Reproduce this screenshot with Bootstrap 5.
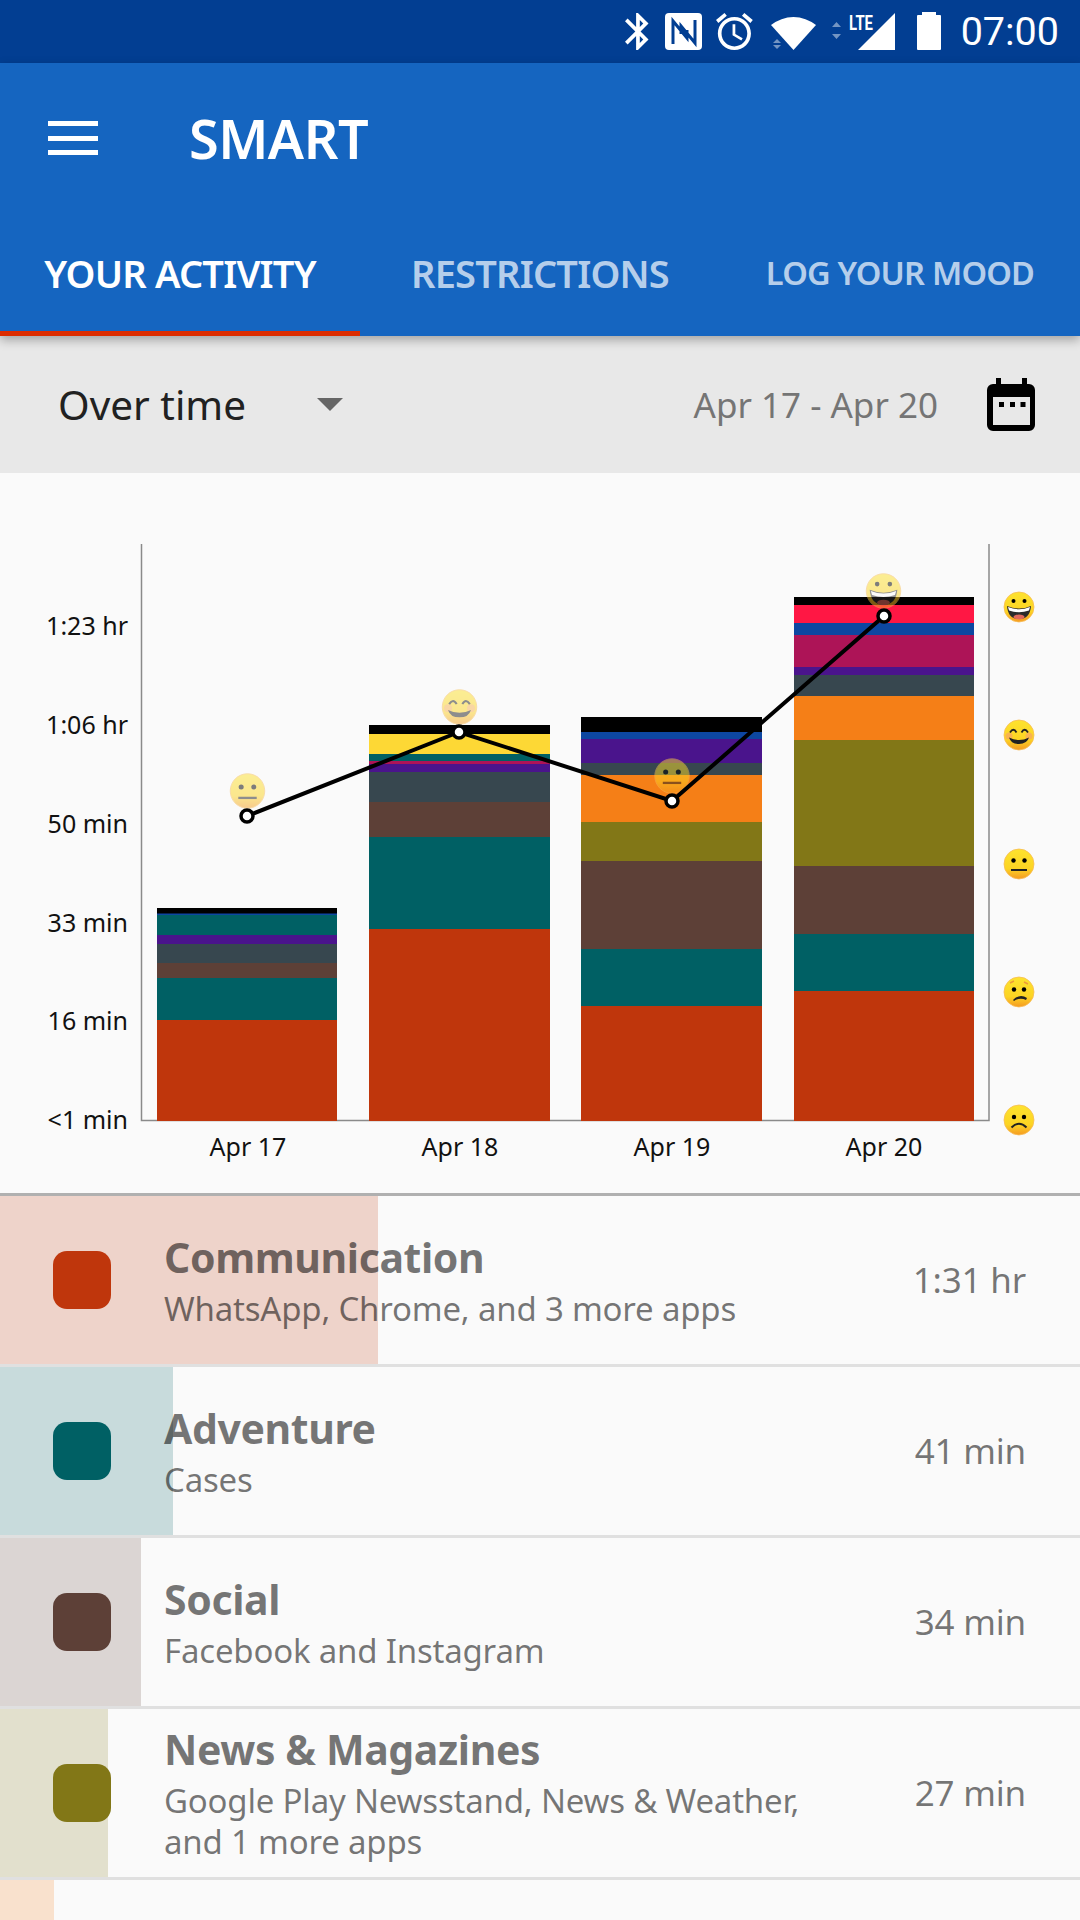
<!DOCTYPE html>
<html lang="en">
<head>
  <meta charset="UTF-8" />
  <meta name="viewport" content="width=device-width, initial-scale=1.0"/>
  <title>SMART</title>
  <link href="https://cdn.jsdelivr.net/npm/bootstrap@5.3.3/dist/css/bootstrap.min.css" rel="stylesheet">
  <style>
    body {
      background: #fafafa;
      font-family: "Noto Sans", "Open Sans", sans-serif;
      height: 1920px;
      overflow: hidden;
    }

    .status-strip { height: 63px; background: #023e92; color: #fff; padding-right: 21px; }
    .status-clock { font-family: Roboto, sans-serif; font-size: 39.5px; margin-left: 11px; }

    .app-header { background: #1565c0; box-shadow: 0 4px 10px rgba(0, 0, 0, .3); position: relative; z-index: 2; }
    .app-toolbar { height: 150px; padding-left: 48px; }
    .burger { width: 50px; margin-right: 91px; }
    .burger span { display: block; height: 5px; background: #fff; margin-bottom: 9.5px; }
    .burger span:last-child { margin-bottom: 0; }
    .app-name { font-size: 54px; font-weight: 600; color: #fff; letter-spacing: -.5px; line-height: 1; }

    .tab-strip { height: 123px; }
    .tab-strip .nav-link {
      width: 360px;
      height: 123px;
      padding: 2px 0 0;
      display: flex;
      align-items: center;
      justify-content: center;
      color: rgba(255, 255, 255, .7);
      font-size: 38px;
      font-weight: 600;
      letter-spacing: -.8px;
      border-bottom: 5px solid transparent;
    }
    .tab-strip .nav-link.active { color: #fff; border-bottom-color: #dd2c00; }
    .tab-strip .tab-tight { font-size: 32.6px; }

    .filter-bar { height: 137px; background: #e8e8e8; padding: 0 45px 0 58px; }
    .filter-label { font-size: 40.5px; color: #212121; width: 259px; padding-top: 2px; }
    .filter-caret { width: 0; height: 0; border-left: 13px solid transparent; border-right: 13px solid transparent; border-top: 13px solid #666; }
    .filter-dates { font-size: 35px; color: #757575; margin-right: 49px; padding-top: 2px; }

    .chart-box { height: 720px; }
    .chart-box svg { display: block; }
    .chart-box text { font-family: "Noto Sans", sans-serif; font-size: 25px; fill: #111; }

    .cat-list { border-top: 3px solid #b0b0b0; border-radius: 0; }
    .list-group-flush > .cat-row {
      height: 171px;
      padding: 0 54px 0 53px;
      background: transparent;
      border: 0;
      border-bottom: 3px solid #e0e0e0;
      color: rgba(0, 0, 0, .54);
    }
    .list-group-flush > .cat-row-end { height: 40px; border-bottom: 0; }
    .cat-fill { position: absolute; left: 0; top: 0; bottom: 0; opacity: .2; }
    .cat-swatch { width: 58px; height: 58px; border-radius: 14px; margin-right: 53px; position: relative; }
    .cat-text { position: relative; }
    .cat-title { font-size: 41px; font-weight: 700; line-height: 50px; letter-spacing: -.4px; }
    .cat-sub { font-size: 33px; line-height: 41px; margin-top: 6px; letter-spacing: -.2px; }
    .cat-time { font-size: 35px; position: relative; letter-spacing: -.2px; }

    .c-red { background: #bf360c; }
    .c-teal { background: #006064; }
    .c-brown { background: #5d4037; }
    .c-olive { background: #827717; }
    .c-orange { background: #f57f17; }
  </style>
</head>
<body>

<div class="status-strip d-flex align-items-center justify-content-end">
  <svg width="330" height="63" viewBox="620 0 330 63" fill="#fff">
    <path transform="translate(625 13) scale(1.85) translate(-5 -2)" d="M17.71 7.71L12 2h-1v7.59L6.41 5 5 6.41 10.59 12 5 17.59 6.41 19 11 14.41V22h1l5.71-5.71-4.3-4.29 4.3-4.29zM13 5.83l1.88 1.88L13 9.59V5.83zm1.88 10.46L13 18.17v-3.76l1.88 1.88z"/>
    <rect x="665" y="13" width="37" height="37" rx="4"/>
    <path d="M673 44V21L687 38V30M695 20V43L681 26V34" fill="none" stroke="#023e92" stroke-width="3"/>
    <path transform="translate(716 13) scale(1.84) translate(-2 -1.86)" d="M22 5.72l-4.6-3.86-1.29 1.53 4.6 3.86L22 5.72zM7.88 3.39L6.6 1.86 2 5.71l1.29 1.53 4.59-3.85zM12.5 8H11v6l4.75 2.85.75-1.23-4-2.37V8zM12 4c-4.97 0-9 4.03-9 9s4.03 9 9 9 9-4.03 9-9-4.03-9-9-9zm0 16c-3.87 0-7-3.13-7-7s3.13-7 7-7 7 3.13 7 7-3.13 7-7 7z"/>
    <path d="M771 25A36 36 0 0 1 816 25L793.500 50Z"/>
    <path d="M773 43l4-4 4 4zM773 45l4 4 4-4z" opacity=".45"/>
    <path d="M832 27l4.500-5 4.500 5zM832 34l4.500 5 4.500-5z" opacity=".45"/>
    <text x="849" y="30" font-family="Roboto, sans-serif" font-weight="700" font-size="20" textLength="24" lengthAdjust="spacingAndGlyphs">LTE</text>
    <path d="M858 50L895 13V50Z"/>
    <path d="M922 15v-3h14v3h4a1 1 0 0 1 1 1v33a1 1 0 0 1-1 1h-22a1 1 0 0 1-1-1V16a1 1 0 0 1 1-1z"/>
  </svg>
  <span class="status-clock">07:00</span>
</div>

<header class="app-header">
  <div class="app-toolbar d-flex align-items-center">
    <div class="burger"><span></span><span></span><span></span></div>
    <div class="app-name">SMART</div>
  </div>
  <nav class="nav tab-strip flex-nowrap">
    <a class="nav-link active" href="#">YOUR ACTIVITY</a>
    <a class="nav-link" href="#">RESTRICTIONS</a>
    <a class="nav-link tab-tight" href="#">LOG YOUR MOOD</a>
  </nav>
</header>

<div class="filter-bar d-flex align-items-center">
  <div class="filter-label">Over time</div>
  <div class="filter-caret"></div>
  <div class="filter-dates ms-auto">Apr 17 - Apr 20</div>
  <svg width="48" height="53" viewBox="0 0 48 53">
    <path d="M9 0h5v6h21V0h5v6h2a6 6 0 0 1 6 6v35a6 6 0 0 1-6 6H6a6 6 0 0 1-6-6V12a6 6 0 0 1 6-6h3z"/>
    <rect x="6" y="19" width="37" height="28" fill="#e8e8e8"/>
    <rect x="12" y="24" width="5" height="5"/>
    <rect x="23" y="24" width="5" height="5"/>
    <rect x="33.500" y="24" width="5" height="5"/>
  </svg>
</div>

<div class="chart-box">
  <svg width="1080" height="720" viewBox="0 473 1080 720">
    <defs>
      <linearGradient id="faceFill" x1="0" y1="0" x2="0" y2="1">
        <stop offset="0" stop-color="#fde32e"/>
        <stop offset=".65" stop-color="#fcd423"/>
        <stop offset="1" stop-color="#f59a22"/>
      </linearGradient>
      <g id="faceGrin">
        <circle r="15" fill="url(#faceFill)" stroke="#f7bc55" stroke-width=".8"/>
        <circle cx="-5.500" cy="-6" r="2"/><circle cx="5.500" cy="-6" r="2"/>
        <path d="M-12 -1Q0 4 12 -1Q11 12 0 12Q-11 12 -12 -1Z" fill="#2b2b2b"/>
        <path d="M-11 0Q0 4.500 11 0L10 3.500Q0 7 -10 3.500Z" fill="#fff"/>
        <ellipse cy="10" rx="5.500" ry="2.500" fill="#e0685c"/>
      </g>
      <g id="faceSmile">
        <circle r="15" fill="url(#faceFill)" stroke="#f7bc55" stroke-width=".8"/>
        <circle cx="-10" cy="1" r="3.500" fill="#f58f7c" opacity=".5"/><circle cx="10" cy="1" r="3.500" fill="#f58f7c" opacity=".5"/>
        <path d="M-9 -2.500Q-5.500 -8 -2.500 -2.500M2.500 -2.500Q5.500 -8 9 -2.500" fill="none" stroke="#222" stroke-width="1.800"/>
        <path d="M-10 2.500Q0 7.500 10 2.500Q8 9 0 9Q-8 9 -10 2.500Z" fill="#222"/>
      </g>
      <g id="faceFlat">
        <circle r="15" fill="url(#faceFill)" stroke="#f7bc55" stroke-width=".8"/>
        <circle cx="-5.500" cy="-3.500" r="2.200"/><circle cx="5.500" cy="-3.500" r="2.200"/>
        <rect x="-8" y="5" width="16" height="2" fill="#222"/>
      </g>
      <g id="faceWorry">
        <circle r="15" fill="url(#faceFill)" stroke="#f7bc55" stroke-width=".8"/>
        <path d="M-9 -9l4 -2M5 -10l4 2" stroke="#ec9a3a" stroke-width="1.500"/>
        <circle cx="-5" cy="-2.500" r="2.200"/><circle cx="5" cy="-2.500" r="2.200"/>
        <path d="M-6 8Q1 1 8 6L7 8Q1 5 -5 9Z" fill="#222"/>
      </g>
      <g id="faceSad">
        <circle r="15" fill="url(#faceFill)" stroke="#f7bc55" stroke-width=".8"/>
        <circle cx="-5" cy="-3" r="2.200"/><circle cx="5" cy="-3" r="2.200"/>
        <path d="M-7.500 7.500Q0 0 7.500 7.500" fill="none" stroke="#222" stroke-width="2"/>
      </g>
    </defs>

    <path d="M141.500 544V1120.500H989V544" fill="none" stroke="#8a8a8a" stroke-width="1.500"/>

    <g>
      <rect x="157" y="908" width="180" height="6" fill="#000"/>
      <rect x="157" y="913.500" width="180" height="1.500" fill="#0d47a1"/>
      <rect x="157" y="915" width="180" height="20" fill="#006064"/>
      <rect x="157" y="935" width="180" height="9" fill="#4a148c"/>
      <rect x="157" y="944" width="180" height="19" fill="#37474f"/>
      <rect x="157" y="963" width="180" height="15" fill="#5d4037"/>
      <rect x="157" y="978" width="180" height="42" fill="#006064"/>
      <rect x="157" y="1020" width="180" height="101" fill="#bf360c"/>
    </g>
    <g>
      <rect x="369" y="725" width="181" height="9" fill="#000"/>
      <rect x="369" y="734" width="181" height="20" fill="#fdd835"/>
      <rect x="369" y="754" width="181" height="7" fill="#006064"/>
      <rect x="369" y="761" width="181" height="3" fill="#ad1457"/>
      <rect x="369" y="764" width="181" height="8" fill="#4a148c"/>
      <rect x="369" y="772" width="181" height="30" fill="#37474f"/>
      <rect x="369" y="802" width="181" height="35" fill="#5d4037"/>
      <rect x="369" y="837" width="181" height="92" fill="#006064"/>
      <rect x="369" y="929" width="181" height="192" fill="#bf360c"/>
    </g>
    <g>
      <rect x="581" y="717" width="181" height="15" fill="#000"/>
      <rect x="581" y="732" width="181" height="7" fill="#0d47a1"/>
      <rect x="581" y="739" width="181" height="24" fill="#4a148c"/>
      <rect x="581" y="763" width="181" height="12" fill="#37474f"/>
      <rect x="581" y="775" width="181" height="47" fill="#f57f17"/>
      <rect x="581" y="822" width="181" height="39" fill="#827717"/>
      <rect x="581" y="861" width="181" height="88" fill="#5d4037"/>
      <rect x="581" y="949" width="181" height="57" fill="#006064"/>
      <rect x="581" y="1006" width="181" height="115" fill="#bf360c"/>
    </g>
    <g>
      <rect x="794" y="597" width="180" height="8" fill="#000"/>
      <rect x="794" y="605" width="180" height="18" fill="#ff1744"/>
      <rect x="794" y="623" width="180" height="12" fill="#0d47a1"/>
      <rect x="794" y="635" width="180" height="32" fill="#ad1457"/>
      <rect x="794" y="667" width="180" height="8" fill="#4a148c"/>
      <rect x="794" y="675" width="180" height="21" fill="#37474f"/>
      <rect x="794" y="696" width="180" height="44" fill="#f57f17"/>
      <rect x="794" y="740" width="180" height="126" fill="#827717"/>
      <rect x="794" y="866" width="180" height="68" fill="#5d4037"/>
      <rect x="794" y="934" width="180" height="57" fill="#006064"/>
      <rect x="794" y="991" width="180" height="130" fill="#bf360c"/>
    </g>

    <use href="#faceFlat" transform="translate(247.500 791) scale(1.150)" opacity=".5"/>
    <use href="#faceSmile" transform="translate(459.500 707) scale(1.150)" opacity=".5"/>
    <use href="#faceFlat" transform="translate(672 776) scale(1.150)" opacity=".5"/>
    <use href="#faceGrin" transform="translate(883.500 591) scale(1.150)" opacity=".5"/>

    <polyline points="247,816 459,732 672,801 884,616" fill="none" stroke="#000" stroke-width="4"/>
    <g fill="#fff" stroke="#000" stroke-width="3.500">
      <circle cx="247" cy="816" r="6"/>
      <circle cx="459" cy="732" r="6"/>
      <circle cx="672" cy="801" r="6"/>
      <circle cx="884" cy="616" r="6"/>
    </g>

    <g text-anchor="end">
      <text x="128" y="635">1:23 hr</text>
      <text x="128" y="734">1:06 hr</text>
      <text x="128" y="833">50 min</text>
      <text x="128" y="932">33 min</text>
      <text x="128" y="1030">16 min</text>
      <text x="128" y="1129">&lt;1 min</text>
    </g>
    <g text-anchor="middle">
      <text x="248" y="1156">Apr 17</text>
      <text x="460" y="1156">Apr 18</text>
      <text x="672" y="1156">Apr 19</text>
      <text x="884" y="1156">Apr 20</text>
    </g>

    <use href="#faceGrin" x="1019" y="607"/>
    <use href="#faceSmile" x="1019" y="735"/>
    <use href="#faceFlat" x="1019" y="864"/>
    <use href="#faceWorry" x="1019" y="992"/>
    <use href="#faceSad" x="1019" y="1120"/>
  </svg>
</div>

<div class="list-group list-group-flush cat-list">
  <div class="list-group-item cat-row d-flex align-items-center">
    <div class="cat-fill c-red" style="width: 378px"></div>
    <div class="cat-swatch c-red"></div>
    <div class="cat-text">
      <div class="cat-title">Communication</div>
      <div class="cat-sub">WhatsApp, Chrome, and 3 more apps</div>
    </div>
    <div class="cat-time ms-auto">1:31 hr</div>
  </div>
  <div class="list-group-item cat-row d-flex align-items-center">
    <div class="cat-fill c-teal" style="width: 173px"></div>
    <div class="cat-swatch c-teal"></div>
    <div class="cat-text">
      <div class="cat-title">Adventure</div>
      <div class="cat-sub">Cases</div>
    </div>
    <div class="cat-time ms-auto">41 min</div>
  </div>
  <div class="list-group-item cat-row d-flex align-items-center">
    <div class="cat-fill c-brown" style="width: 141px"></div>
    <div class="cat-swatch c-brown"></div>
    <div class="cat-text">
      <div class="cat-title">Social</div>
      <div class="cat-sub">Facebook and Instagram</div>
    </div>
    <div class="cat-time ms-auto">34 min</div>
  </div>
  <div class="list-group-item cat-row d-flex align-items-center">
    <div class="cat-fill c-olive" style="width: 108px"></div>
    <div class="cat-swatch c-olive"></div>
    <div class="cat-text">
      <div class="cat-title">News &amp; Magazines</div>
      <div class="cat-sub">Google Play Newsstand, News &amp; Weather,<br>and 1 more apps</div>
    </div>
    <div class="cat-time ms-auto">27 min</div>
  </div>
  <div class="list-group-item cat-row cat-row-end d-flex align-items-center">
    <div class="cat-fill c-orange" style="width: 54px"></div>
  </div>
</div>

<script src="https://cdn.jsdelivr.net/npm/bootstrap@5.3.3/dist/js/bootstrap.bundle.min.js"></script>
</body>
</html>
